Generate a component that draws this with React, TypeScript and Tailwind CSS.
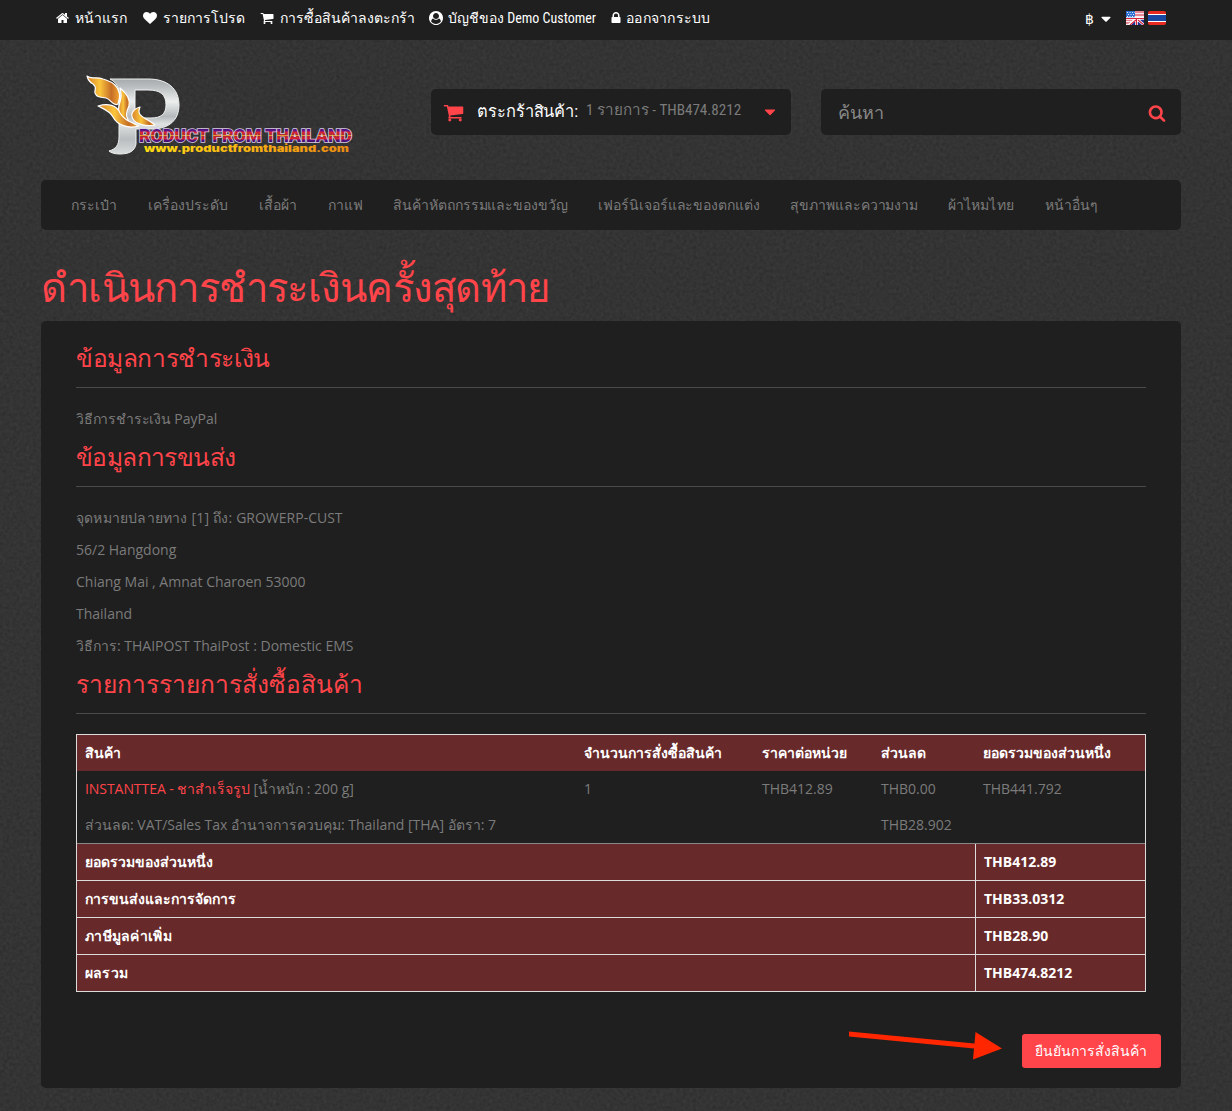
import type { ReactNode } from 'react'

const icons = {
  home: 'M1408 992v480q0 26-19 45t-45 19h-384v-384h-256v384h-384q-26 0-45-19t-19-45v-480q0-1 .5-3t.5-3l575-474 575 474q1 2 1 6zm223-69l-62 74q-8 9-21 11h-3q-13 0-21-7l-692-577-692 577q-12 8-24 7-13-2-21-11l-62-74q-8-10-7-23.5t11-21.5l719-599q32-26 76-26t76 26l244 204v-195q0-14 9-23t23-9h192q14 0 23 9t9 23v408l219 182q10 8 11 21.5t-7 23.5z',
  heart: 'M896 1664q-26 0-44-18l-624-602q-10-8-27.5-26t-55.5-65.5-68-97.5-53.5-121-23.5-138q0-220 127-344t351-124q62 0 126.5 21.5t120 58 95.5 68.5 76 68q36-36 76-68t95.5-68.5 120-58 126.5-21.5q224 0 351 124t127 344q0 221-229 450l-623 600q-18 18-44 18z',
  cart: 'M704 1536q0 52-38 90t-90 38-90-38-38-90 38-90 90-38 90 38 38 90zm896 0q0 52-38 90t-90 38-90-38-38-90 38-90 90-38 90 38 38 90zm128-1088v512q0 24-16.5 42.5t-40.5 21.5l-1044 122q13 60 13 70 0 16-24 64h920q26 0 45 19t19 45-19 45-45 19h-1024q-26 0-45-19t-19-45q0-11 8-31.5t16-36 21.5-40 15.5-29.5l-177-823h-204q-26 0-45-19t-19-45 19-45 45-19h256q16 0 28.5 6.5t19.5 15.5 13 24.5 8 26 5.5 29.5 4.5 26h1201q26 0 45 19t19 45z',
  user: 'M1523 1339q-22-155-87.5-257.5t-184.5-118.5q-67 74-159.5 115.5t-195.5 41.5-195.5-41.5-159.5-115.5q-119 16-184.5 118.5t-87.5 257.5q106 150 271 237.5t356 87.5 356-87.5 271-237.5zm-243-699q0-159-112.5-271.5t-271.5-112.5-271.5 112.5-112.5 271.5 112.5 271.5 271.5 112.5 271.5-112.5 112.5-271.5zm512 256q0 182-71 347.5t-190.5 286-285.5 191.5-349 71q-182 0-348-71t-286-191-191-286-71-348 71-348 191-286 286-191 348-71 348 71 286 191 191 286 71 348z',
  lock: 'M640 768h512v-192q0-106-75-181t-181-75-181 75-75 181v192zm832 96v576q0 40-28 68t-68 28h-960q-40 0-68-28t-28-68v-576q0-40 28-68t68-28h32v-192q0-184 132-316t316-132 316 132 132 316v192h32q40 0 68 28t28 68z',
  search: 'M1216 832q0-185-131.5-316.5t-316.5-131.5-316.5 131.5-131.5 316.5 131.5 316.5 316.5 131.5 316.5-131.5 131.5-316.5zm512 832q0 52-38 90t-90 38q-54 0-90-38l-343-342q-179 124-399 124-143 0-273.5-55.5t-225-150-150-225-55.5-273.5 55.5-273.5 150-225 225-150 273.5-55.5 273.5 55.5 225 150 150 225 55.5 273.5q0 220-124 399l343 343q37 37 37 90z',
  caret: 'M1408 704q0 26-19 45l-448 448q-19 19-45 19t-45-19l-448-448q-19-19-19-45t19-45 45-19h896q26 0 45 19t19 45z',
}

function Icon({ name, className }: { name: keyof typeof icons; className: string }) {
  return (
    <svg viewBox="0 0 1792 1792" fill="currentColor" className={'shrink-0 ' + className}>
      <path d={icons[name]} />
    </svg>
  )
}

function Texture() {
  return (
    <svg className="pointer-events-none absolute inset-0 -z-10 h-full w-full">
      <filter id="grain" x="0" y="0" width="100%" height="100%" colorInterpolationFilters="sRGB">
        <feTurbulence type="fractalNoise" baseFrequency="0.3" numOctaves="4" seed="7" />
        <feColorMatrix values="0.06 0.03 0 0 0.158  0.06 0.03 0 0 0.158  0.06 0.03 0 0 0.158  0 0 0 0 1" />
      </filter>
      <rect width="100%" height="100%" filter="url(#grain)" />
    </svg>
  )
}

function Logo() {
  return (
    <svg width="275" height="90" viewBox="0 0 275 90">
      <defs>
        <linearGradient id="silver" x1="0" y1="0" x2="0" y2="1">
          <stop offset="0" stopColor="#a5aaac" />
          <stop offset=".1" stopColor="#b9bdbf" />
          <stop offset=".3" stopColor="#eceeee" />
          <stop offset=".5" stopColor="#b4b9bb" />
          <stop offset=".6" stopColor="#dfe2e2" />
          <stop offset=".8" stopColor="#b9bdbf" />
          <stop offset="1" stopColor="#d9dcdc" />
        </linearGradient>
        <linearGradient id="gold" x1="0" y1="0" x2="1" y2="0">
          <stop offset="0" stopColor="#d8832a" />
          <stop offset=".4" stopColor="#fbc53b" />
          <stop offset=".75" stopColor="#c46d27" />
          <stop offset="1" stopColor="#f3a52f" />
        </linearGradient>
        <linearGradient id="stripes" gradientUnits="userSpaceOnUse" x1="0" y1="57" x2="0" y2="70">
          <stop offset="0" stopColor="#43107c" />
          <stop offset=".15" stopColor="#6a1585" />
          <stop offset=".25" stopColor="#e0222c" />
          <stop offset=".42" stopColor="#ad2833" />
          <stop offset=".5" stopColor="#e39a35" />
          <stop offset=".58" stopColor="#b02234" />
          <stop offset=".75" stopColor="#e0222c" />
          <stop offset=".85" stopColor="#5a1280" />
          <stop offset="1" stopColor="#35106c" />
        </linearGradient>
        <linearGradient id="amber" x1="0" y1="0" x2="1" y2="0">
          <stop offset="0" stopColor="#fddc12" />
          <stop offset=".5" stopColor="#f9b312" />
          <stop offset="1" stopColor="#e98a12" />
        </linearGradient>
      </defs>
      <path d="M24 7H62C82 7 93 17 93 33C93 48 83 57 66 57H50V72C49 79 43 82 34 82C29 82 25 81 23 79C30 77 33 73 33 65V24C33 15 30 10 24 7ZM49 18V46H65C75 46 80 42 80 33C80 22 74 18 62 18Z" fill="url(#silver)" fillRule="evenodd" stroke="#eef0f0" strokeWidth="1" />
      <g fill="url(#gold)" stroke="#fff" strokeWidth="1.2" strokeLinejoin="round">
        <path d="M1 4C5 8 10 4 17 7C22 9 25 9 29 13C33 17 35 24 32 32C27 35 25 27 20 26C15 25 11 26 9 21C8 17 12 16 7 12C3 10 2 8 1 4Z" />
        <path d="M34 16C39 20 45 26 43 34C40 40 39 44 44 51C36 49 31 43 33 34C34 28 37 26 34 16Z" />
        <path d="M12 34C22 31 31 33 34 41C38 48 45 50 53 54C42 57 31 53 27 45C24 39 18 37 12 34Z" />
        <path d="M54 35C51 42 55 44 60 47C65 50 68 52 69 53C60 55 50 52 47 47C44 42 47 37 54 35Z" />
      </g>
      <text x="53" y="70" textLength="213" lengthAdjust="spacing" fill="url(#stripes)" stroke="#d9cbe4" strokeWidth="1.6" paintOrder="stroke" className="font-['Roboto'] text-[18px] font-black">RODUCT FROM THAILAND</text>
      <text x="58" y="79.500" textLength="205" lengthAdjust="spacingAndGlyphs" fill="url(#amber)" className="font-['Inter'] text-[9.5px] font-black">www.productfromthailand.com</text>
    </svg>
  )
}

function Flags() {
  return (
    <div className="flex gap-1">
      <svg width="18" height="14" viewBox="0 0 18 14">
        <rect width="18" height="14" fill="#f4e9ec" />
        <path d="M9 1h9M9 4h9M0 9h8M0 12h5" stroke="#d5203a" strokeWidth="1.2" />
        <rect width="9" height="7" fill="#2c6fd0" />
        <path d="M1 1.5h8M2 3.5h7M1 5.5h8" stroke="#fff" strokeWidth=".9" strokeDasharray="1 1.5" />
        <path d="M10 7h8v7H5z" fill="#1a2f8c" />
        <path d="M3 14L10 8M11 8l7 6M0 7.5h18M10.500 7v7" stroke="#fff" strokeWidth="2.6" />
        <path d="M4 14L10 9M12 9l6 5M0 7.500h18M10.500 7v7" stroke="#d5203a" strokeWidth="1.100" />
      </svg>
      <svg width="18" height="14" viewBox="0 0 18 14">
        <rect width="18" height="14" rx="2" fill="#e82b20" />
        <path d="M0 3h18v8H0z" fill="#fff" />
        <path d="M0 4h18v6H0z" fill="#1747a0" />
      </svg>
    </div>
  )
}

const topLinks: { icon: keyof typeof icons; label: string; width: string; gap: string }[] = [
  { icon: 'home', label: 'หน้าแรก', width: 'w-[87px]', gap: 'gap-[5px] tracking-[0.1px]' },
  { icon: 'heart', label: 'รายการโปรด', width: 'w-[117px]', gap: 'gap-1.5' },
  { icon: 'cart', label: 'การซื้อสินค้าลงตะกร้า', width: 'w-[169px]', gap: 'gap-1.5' },
  { icon: 'user', label: 'บัญชีของ Demo Customer', width: 'w-[180px]', gap: 'gap-[5px]' },
  { icon: 'lock', label: 'ออกจากระบบ', width: 'w-[110px]', gap: 'gap-[3px] tracking-[0.25px]' },
]

const categories = [
  ['กระเป๋า', 'w-[77px]'],
  ['เครื่องประดับ', 'w-[111px]'],
  ['เสื้อผ้า', 'w-[69px] tracking-[0.1px]'],
  ['กาแฟ', 'w-[65px] tracking-[0.15px]'],
  ['สินค้าหัตถกรรมและของขวัญ', 'w-[205px] tracking-[-0.05px]'],
  ['เฟอร์นิเจอร์และของตกแต่ง', 'w-[192px] tracking-[-0.05px]'],
  ['สุขภาพและความงาม', 'w-[158px] tracking-[-0.05px]'],
  ['ผ้าไหมไทย', 'w-[97px] tracking-[0.1px]'],
  ['หน้าอื่นๆ', ''],
]

const totals = [
  ['ยอดรวมของส่วนหนึ่ง', 'THB412.89', ''],
  ['การขนส่งและการจัดการ', 'THB33.0312', ''],
  ['ภาษีมูลค่าเพิ่ม', 'THB28.90', 'tracking-[0.3px]'],
  ['ผลรวม', 'THB474.8212', 'tracking-[0.2px]'],
]

function SectionTitle({ children, className }: { children: ReactNode; className: string }) {
  return <h2 className={'mb-5 h-[47px] border-b border-[#4a4a4a] text-[24.5px] leading-[34px] text-[#ff444a] ' + className}>{children}</h2>
}

function Row({ cells, className }: { cells: ReactNode[]; className: string }) {
  return (
    <div className={'grid h-9 grid-cols-[499px_178px_119px_102px_1fr] items-center px-2 ' + className}>
      {cells.map((cell, i) => <span key={i} className="whitespace-nowrap">{cell}</span>)}
    </div>
  )
}

export default function App() {
  return (
    <div className="relative isolate h-[1111px] w-[1232px] overflow-hidden bg-[#333] font-['Open_Sans',sans-serif] text-sm leading-5 text-[#7b7b7b]">
      <Texture />
      <header className="flex h-10 items-start bg-[#1f1f1f] pl-14 font-['Roboto_Condensed',sans-serif] text-white">
        {topLinks.map((l) => (
          <a key={l.label} className={'flex h-9 items-center whitespace-nowrap ' + l.width + ' ' + l.gap}>
            <Icon name={l.icon} className="size-3.5" />
            {l.label}
          </a>
        ))}
        <div className="ml-auto flex h-9 w-[147px] items-center">
          <span className="w-[13px] pt-0.5">฿</span>
          <Icon name="caret" className="mt-0.5 size-4" />
          <div className="ml-3"><Flags /></div>
        </div>
      </header>

      <main className="ml-[41px] w-[1140px]">
        <div className="flex h-[140px] items-start">
          <div className="w-[390px] pt-[32px] pl-[45px]"><Logo /></div>
          <div className="mt-[49px] flex h-[46px] w-[360px] items-center rounded-[5px] bg-[#1f1f1f] pr-3 pl-3 font-['Roboto_Condensed',sans-serif]">
            <Icon name="cart" className="size-[21px] text-[#ff444a]" />
            <span className="ml-[13px] w-[109px] text-[16.4px] tracking-[-0.08px] whitespace-nowrap text-white">ตระกร้าสินค้า:</span>
            <span className="-mt-1 text-[15.2px] tracking-[-0.03px] whitespace-nowrap">1 รายการ - THB474.8212</span>
            <Icon name="caret" className="ml-auto size-[18px] text-[#ff444a]" />
          </div>
          <div className="mt-[49px] ml-[30px] flex h-[46px] w-[360px] items-center justify-between rounded-[5px] bg-[#1f1f1f] pr-[15px] pl-[17px] text-lg text-[#888]">
            ค้นหา
            <Icon name="search" className="mt-px size-[18px] text-[#ff444a]" />
          </div>
        </div>

        <nav className="flex h-[50px] items-center rounded-[5px] bg-[#1f1f1f] pl-[30px] font-['Roboto_Condensed',sans-serif]">
          {categories.map(([label, style]) => <a key={label} className={'shrink-0 whitespace-nowrap ' + style}>{label}</a>)}
        </nav>

        <h1 className="h-[91px] pt-[34px] text-[40px] leading-[46px] tracking-[-0.75px] text-[#ff444a]">ดำเนินการชำระเงินครั้งสุดท้าย</h1>

        <section className="h-[767px] rounded-[5px] bg-[#1f1f1f] pt-5 pr-5 pl-[35px]">
          <div className="mr-[15px]">
            <SectionTitle className="tracking-[-0.4px]">ข้อมูลการชำระเงิน</SectionTitle>
            <p className="h-8 leading-[22px]"><span className="tracking-[-0.2px]">วิธีการชำระเงิน </span>PayPal</p>
            <SectionTitle className="tracking-[-0.6px]">ข้อมูลการขนส่ง</SectionTitle>
            <div className="leading-[22px]">
              <p className="h-8"><span className="tracking-[0.2px]">จุดหมายปลายทาง [1] ถึง: </span>GROWERP-CUST</p>
              <p className="h-8">56/2 Hangdong</p>
              <p className="h-8">Chiang Mai , Amnat Charoen 53000</p>
              <p className="h-8">Thailand</p>
              <p className="h-8">วิธีการ: THAIPOST ThaiPost : Domestic EMS</p>
            </div>
            <SectionTitle className="tracking-[0.01px]">รายการรายการสั่งซื้อสินค้า</SectionTitle>

            <div className="border border-[#ddd]">
              <Row className="bg-[#68292a] font-bold text-white" cells={['สินค้า', 'จำนวนการสั่งซื้อสินค้า', 'ราคาต่อหน่วย', 'ส่วนลด', 'ยอดรวมของส่วนหนึ่ง']} />
              <Row className="" cells={[<><span className="tracking-[-0.06px] text-[#ff444a]">INSTANTTEA - ชาสำเร็จรูป</span> [น้ำหนัก : 200 g]</>, '1', 'THB412.89', 'THB0.00', 'THB441.792']} />
              <Row className="" cells={['ส่วนลด: VAT/Sales Tax อำนาจการควบคุม: Thailand [THA] อัตรา: 7', '', '', 'THB28.902', '']} />
              {totals.map(([label, value, spacing], i) => (
                <div key={label} className={'flex h-[37px] border-t bg-[#68292a] font-bold text-white ' + (i ? 'border-[#ddd]' : 'border-[#888]')}>
                  <span className={'w-[898px] px-2 leading-9 ' + spacing}>{label}</span>
                  <span className="border-l border-[#ddd] px-2 leading-9">{value}</span>
                </div>
              ))}
            </div>
          </div>

          <div className="mt-[38px] flex items-start justify-end">
            <svg width="154" height="30" viewBox="0 0 154 30" className="mr-[19px] fill-[#ff2600]">
              <path d="M0 1.400L125.500 13.500 126.500 2 153 18.500 124 29.500 125 18.500 0 6.500z" />
            </svg>
            <button className="mt-1 h-[34px] w-[139px] rounded-[3px] bg-[#ff444a] pr-px text-center whitespace-nowrap text-white">ยืนยันการสั่งสินค้า</button>
          </div>
        </section>
      </main>
    </div>
  )
}
